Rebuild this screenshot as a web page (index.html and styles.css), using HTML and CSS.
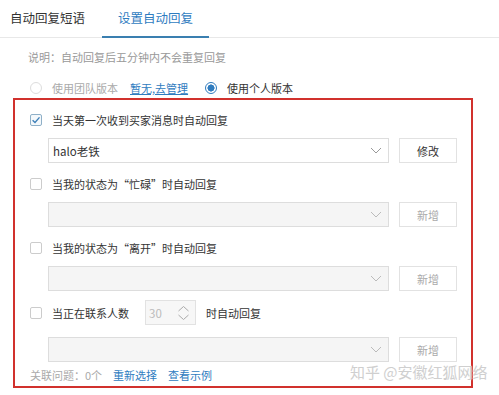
FILE: index.html
```html
<!DOCTYPE html>
<html lang="zh">
<head>
<meta charset="utf-8">
<link rel="stylesheet" href="styles.css">
</head>
<body>
<div class="page">
  <div class="tabs">
    <div class="tab">自动回复短语</div>
    <div class="tab active">设置自动回复</div>
  </div>
  <div class="note">说明：自动回复后五分钟内不会重复回复</div>
  <div class="radios">
    <span class="radio disabled"></span>
    <span class="radio-label muted">使用团队版本</span>
    <a class="link underline">暂无,去管理</a>
    <span class="radio on"></span>
    <span class="radio-label">使用个人版本</span>
  </div>
  <div class="box">
    <div class="group">
      <div class="row">
        <span class="check checked"><svg width="10" height="10" viewBox="0 0 10 10"><path d="M1.6 5.2 L4 7.5 L8.5 2.4" fill="none" stroke="#3d7fb8" stroke-width="1.4"/></svg></span>
        <span class="label">当天第一次收到买家消息时自动回复</span>
      </div>
      <div class="field">
        <div class="select"><span class="value">halo老铁</span><svg class="chev" width="12" height="7" viewBox="0 0 12 7"><path d="M1 1 L6 6 L11 1" fill="none" stroke="#999" stroke-width="1"/></svg></div>
        <div class="btn">修改</div>
      </div>
    </div>
    <div class="group">
      <div class="row">
        <span class="check"></span>
        <span class="label">当我的状态为“忙碌”时自动回复</span>
      </div>
      <div class="field">
        <div class="select empty"><svg class="chev" width="12" height="7" viewBox="0 0 12 7"><path d="M1 1 L6 6 L11 1" fill="none" stroke="#bbb" stroke-width="1"/></svg></div>
        <div class="btn dim">新增</div>
      </div>
    </div>
    <div class="group">
      <div class="row">
        <span class="check"></span>
        <span class="label">当我的状态为“离开”时自动回复</span>
      </div>
      <div class="field">
        <div class="select empty"><svg class="chev" width="12" height="7" viewBox="0 0 12 7"><path d="M1 1 L6 6 L11 1" fill="none" stroke="#bbb" stroke-width="1"/></svg></div>
        <div class="btn dim">新增</div>
      </div>
    </div>
    <div class="group g4">
      <div class="row tall">
        <span class="check"></span>
        <span class="label">当正在联系人数</span>
        <div class="num"><span class="numval">30</span><svg class="spin" width="13" height="16" viewBox="0 0 13 16"><path d="M1.5 6 L6.5 1.5 L11.5 6 M1.5 10 L6.5 14.5 L11.5 10" fill="none" stroke="#aaa" stroke-width="1"/></svg></div>
        <span class="label after">时自动回复</span>
      </div>
      <div class="field f4">
        <div class="select empty"><svg class="chev" width="12" height="7" viewBox="0 0 12 7"><path d="M1 1 L6 6 L11 1" fill="none" stroke="#bbb" stroke-width="1"/></svg></div>
        <div class="btn dim">新增</div>
      </div>
    </div>
    <div class="foot">
      <span class="muted">关联问题：0个</span>
      <a class="link">重新选择</a>
      <a class="link">查看示例</a>
    </div>
  </div>
  <div class="watermark">知乎 @安徽红狐网络</div>
</div>
</body>
</html>
```
FILE: styles.css
```css
* { box-sizing: border-box; }
html, body { margin: 0; padding: 0; background: #fff; }
body {
  font-family: "Noto Sans CJK SC", "Noto Sans", sans-serif;
  color: #333;
  font-size: 11px;
}
.page { position: relative; width: 499px; height: 395px; overflow: hidden; }
.tabs {
  display: flex;
  height: 38px;
  padding-left: 10px;
  border-bottom: 1px solid #e8e8e8;
}
.tab {
  font-size: 12.5px;
  line-height: 36px;
  color: #333;
  margin-right: 17px;
}
.tab.active {
  color: #2f7cbf;
  padding: 0 16px;
  border-bottom: 2px solid #3a7fb0;
  height: 38px;
}
.note {
  margin: 11px 0 0 28px;
  line-height: 16px;
  color: #999;
}
.radios {
  display: flex;
  align-items: center;
  height: 16px;
  margin: 15px 0 0 30px;
}
.radio {
  width: 12px; height: 12px;
  border-radius: 50%;
  border: 1px solid #ddd;
  background: #fff;
  flex: none;
}
.radio.on {
  border-color: #2f7cbf;
  background: radial-gradient(circle, #2f7cbf 0 3.3px, #fff 3.8px);
  margin-left: 17px;
}
.radio-label { margin-left: 10px; }
.muted { color: #aaa; }
.link { color: #2f7cbf; margin-left: 12px; cursor: pointer; }
.link.underline { text-decoration: underline; }
.box {
  margin: 2px 0 0 13px;
  width: 460px;
  height: 290px;
  border: 2px solid #d1312d;
  padding: 8px 0 0 15px;
}
.group { margin-bottom: 9px; }
.group.g4 { margin-top: 2px; margin-bottom: 0; }
.row {
  display: flex;
  align-items: center;
  height: 24px;
}
.row.tall { height: 25px; }
.check {
  width: 12px; height: 12px;
  border: 1px solid #ccc;
  border-radius: 2px;
  background: #fff;
  flex: none;
  display: flex;
  align-items: center;
  justify-content: center;
}
.check.checked { border-color: #8fb0c8; background: #f4f8fb; }
.label { margin-left: 10px; line-height: 16px; }
.label.after { margin-left: 10px; }
.field {
  display: flex;
  margin: 6px 0 0 18px;
}
.field.f4 { margin-top: 12px; }
.select {
  width: 341px;
  height: 25px;
  border: 1px solid #ddd;
  background: #fff;
  display: flex;
  align-items: center;
  justify-content: space-between;
  padding: 0 6px 0 4px;
}
.select.empty { background: #f5f5f5; justify-content: flex-end; }
.value { color: #333; font-size: 11.5px; }
.btn {
  margin-left: 10px;
  width: 58px;
  height: 25px;
  border: 1px solid #e2e2e2;
  background: #fff;
  display: flex;
  align-items: center;
  justify-content: center;
  color: #333;
}
.btn.dim { color: #aaa; }
.num {
  margin-left: 16px;
  width: 51px;
  height: 25px;
  border: 1px solid #e2e2e2;
  background: #f7f7f7;
  display: flex;
  align-items: center;
  justify-content: space-between;
  padding: 0 5px 0 3px;
}
.numval { color: #bbb; font-size: 11.5px; }
.foot {
  display: flex;
  align-items: center;
  height: 16px;
  margin-top: 5px;
}
.foot .link { margin-left: 11px; }
.watermark {
  position: absolute;
  left: 350px;
  top: 362px;
  font-size: 15px;
  line-height: 20px;
  color: #cfcfcf;
  text-shadow: 0 0 2px #fff, 0 0 1px #fff;
  white-space: nowrap;
}
```
